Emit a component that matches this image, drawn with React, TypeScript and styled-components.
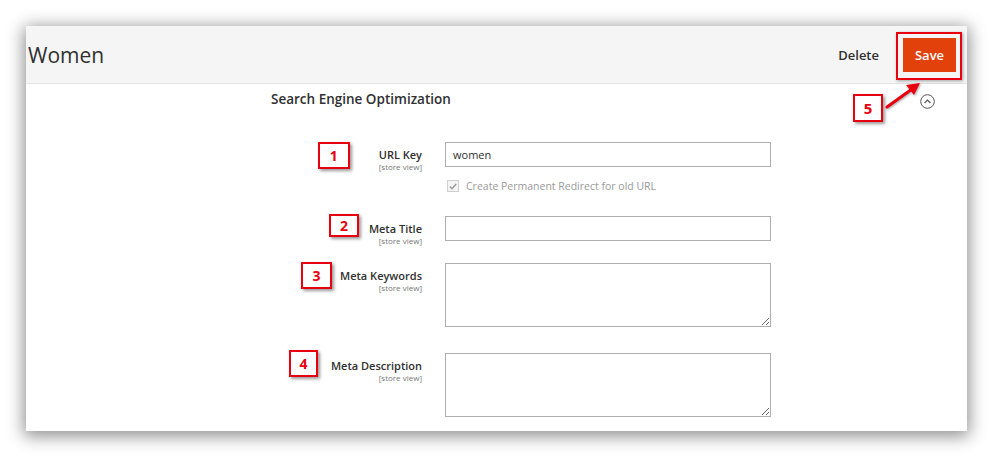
import React from "react";
import styled, { createGlobalStyle } from "styled-components";

const Global = createGlobalStyle`
  html, body { margin: 0; padding: 0; background: #fff; }
  body { font-family: "Open Sans", "Liberation Sans", sans-serif; color: #303030; }
  * { box-sizing: border-box; }
`;

const RED = "#e8000f";

const Page = styled.div`
  width: 993px;
  height: 457px;
  padding: 26px 0 0 26px;
  overflow: hidden;
  background: #fff;
`;

const Card = styled.div`
  position: relative;
  width: 941px;
  height: 405px;
  background: #fff;
  box-shadow: 0 3px 16px 2px rgba(0, 0, 0, 0.45);
`;

const Header = styled.header`
  display: flex;
  align-items: center;
  justify-content: space-between;
  height: 58px;
  background: #f5f5f5;
  border-bottom: 1px solid #e3e3e3;
  padding: 0 5px 0 2px;
`;

const Title = styled.h1`
  margin: 0;
  font-size: 21px;
  font-weight: 400;
  color: #303030;
`;

const Actions = styled.div`
  display: flex;
  align-items: center;
  align-self: flex-start;
  margin-top: 6px;
`;

const DeleteButton = styled.button`
  border: none;
  background: none;
  padding: 0;
  margin-right: 17px;
  margin-top: -2px;
  font-family: inherit;
  font-size: 13px;
  font-weight: 600;
  color: #303030;
`;

const Highlight = styled.div`
  border: 2px solid ${RED};
  padding: 4px 4px 6px 5px;
  box-shadow: 1px 1px 3px rgba(0, 0, 0, 0.35);
`;

const SaveButton = styled.button`
  display: block;
  width: 53px;
  height: 34px;
  border: none;
  background: #e2410c;
  color: #fff;
  font-family: inherit;
  font-size: 13px;
  font-weight: 600;
  padding: 0;
`;

const Badge = styled.div<{ $w: number; $h: number; $top?: number; $gap?: number }>`
  flex: none;
  width: ${(p) => p.$w}px;
  height: ${(p) => p.$h}px;
  margin-top: ${(p) => p.$top ?? 0}px;
  margin-right: ${(p) => p.$gap ?? 0}px;
  display: flex;
  align-items: center;
  justify-content: center;
  background: #fff;
  border: 2px solid ${RED};
  box-shadow: 2px 2px 3px rgba(0, 0, 0, 0.4);
  color: ${RED};
  font-family: "Open Sans", "Liberation Sans", sans-serif;
  font-weight: 700;
  font-size: 14px;
  line-height: 1;
`;

const FloatingBadge = styled(Badge)`
  position: absolute;
  left: 827px;
  top: 68px;
  font-size: 15px;
`;

const Arrow = styled.svg`
  position: absolute;
  left: 858px;
  top: 53px;
  overflow: visible;
  filter: drop-shadow(1px 1px 1px rgba(0, 0, 0, 0.35));
`;

const SectionHead = styled.div`
  display: flex;
  align-items: center;
  justify-content: space-between;
  height: 18px;
  margin-top: 6px;
  padding: 0 32px 0 245px;
`;

const SectionTitle = styled.h2`
  margin: 0;
  font-size: 13.5px;
  font-weight: 600;
  line-height: 18px;
  color: #303030;
`;

const Collapse = styled.svg`
  display: block;
  margin-top: 4px;
`;

const Form = styled.div`
  display: flex;
  flex-direction: column;
  margin-top: 34px;
`;

const Field = styled.div<{ $mb: number }>`
  display: grid;
  grid-template-columns: 396px 326px;
  column-gap: 23px;
  align-items: start;
  margin-bottom: ${(p) => p.$mb}px;
`;

const LabelCell = styled.div`
  display: flex;
  justify-content: flex-end;
  align-items: flex-start;
`;

const LabelText = styled.label`
  display: flex;
  flex-direction: column;
  align-items: flex-end;
  padding-top: 6px;
`;

const LabelMain = styled.span`
  font-size: 11px;
  font-weight: 600;
  line-height: 14px;
  color: #303030;
`;

const Scope = styled.span`
  font-size: 8px;
  line-height: 10px;
  color: #777;
`;

const Control = styled.div`
  display: flex;
  flex-direction: column;
`;

const TextInput = styled.input`
  width: 326px;
  height: 25px;
  border: 1px solid #adadad;
  padding: 0 7px;
  font-family: inherit;
  font-size: 11px;
  color: #303030;
  outline: none;
`;

const TextArea = styled.textarea`
  display: block;
  width: 326px;
  height: 64px;
  border: 1px solid #adadad;
  padding: 4px 7px;
  font-family: inherit;
  font-size: 11px;
  resize: vertical;
  outline: none;
`;

const CheckRow = styled.div`
  display: flex;
  align-items: center;
  gap: 7px;
  margin-top: 13px;
  height: 12px;
  padding-left: 2px;
`;

const CheckBox = styled.span`
  display: flex;
  align-items: center;
  justify-content: center;
  width: 12px;
  height: 12px;
  border: 1px solid #cfcfcf;
  background: #f4f4f4;
`;

const CheckLabel = styled.span`
  font-size: 10.5px;
  color: #9a9a9a;
`;

type Row = { label: string; n: number; w: number; h: number; top: number; gap: number; mb: number; kind: "input" | "area"; value?: string; check?: boolean };

const rows: Row[] = [
  { label: "URL Key", n: 1, w: 32, h: 27, top: 0, gap: 29, mb: 24, kind: "input", value: "women", check: true },
  { label: "Meta Title", n: 2, w: 30, h: 23, top: -2, gap: 10, mb: 17, kind: "input" },
  { label: "Meta Keywords", n: 3, w: 31, h: 27, top: -1, gap: 8, mb: 26, kind: "area" },
  { label: "Meta Description", n: 4, w: 29, h: 27, top: -3, gap: 13, mb: 0, kind: "area" },
];

export default function App() {
  return (
    <>
      <Global />
      <Page>
        <Card>
          <Header>
            <Title>Women</Title>
            <Actions>
              <DeleteButton>Delete</DeleteButton>
              <Highlight>
                <SaveButton>Save</SaveButton>
              </Highlight>
            </Actions>
          </Header>

          <SectionHead>
            <SectionTitle>Search Engine Optimization</SectionTitle>
            <Collapse width="15" height="15" viewBox="0 0 15 15">
              <circle cx="7.5" cy="7.5" r="6.8" fill="none" stroke="#555" strokeWidth="1" />
              <path d="M4.6 9 L7.5 6.1 L10.4 9" fill="none" stroke="#555" strokeWidth="1.2" />
            </Collapse>
          </SectionHead>

          <Form>
            {rows.map((r) => (
              <Field key={r.label} $mb={r.mb}>
                <LabelCell>
                  <Badge $w={r.w} $h={r.h} $top={r.top} $gap={r.gap}>{r.n}</Badge>
                  <LabelText>
                    <LabelMain>{r.label}</LabelMain>
                    <Scope>[store view]</Scope>
                  </LabelText>
                </LabelCell>
                <Control>
                  {r.kind === "input" ? <TextInput defaultValue={r.value ?? ""} /> : <TextArea />}
                  {r.check && (
                    <CheckRow>
                      <CheckBox>
                        <svg width="8" height="7" viewBox="0 0 8 7">
                          <path d="M0.8 3.6 L3 5.7 L7.2 1" fill="none" stroke="#9a9a9a" strokeWidth="1.4" />
                        </svg>
                      </CheckBox>
                      <CheckLabel>Create Permanent Redirect for old URL</CheckLabel>
                    </CheckRow>
                  )}
                </Control>
              </Field>
            ))}
          </Form>

          <FloatingBadge $w={30} $h={28}>5</FloatingBadge>
          <Arrow width="40" height="32" viewBox="0 0 40 32">
            <line x1="3" y1="28" x2="28" y2="10" stroke={RED} strokeWidth="3" strokeLinecap="round" />
            <polygon points="36,4 22,6 30,16" fill={RED} />
          </Arrow>
        </Card>
      </Page>
    </>
  );
}
